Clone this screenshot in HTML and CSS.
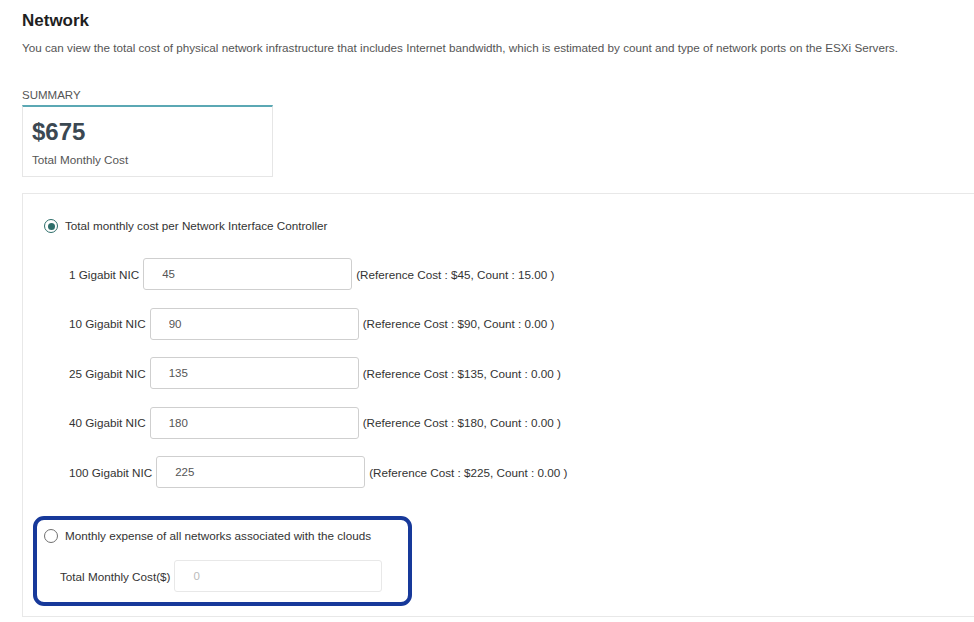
FILE: index.html
```html
<!DOCTYPE html>
<html>
<head>
<meta charset="utf-8">
<link rel="stylesheet" href="styles.css">
</head>
<body>
<div class="page">
  <h1 class="title">Network</h1>
  <p class="desc">You can view the total cost of physical network infrastructure that includes Internet bandwidth, which is estimated by count and type of network ports on the ESXi Servers.</p>

  <div class="summary-label">SUMMARY</div>
  <div class="summary-card">
    <div class="summary-value">$675</div>
    <div class="summary-sub">Total Monthly Cost</div>
  </div>

  <div class="panel">
    <div class="option-row">
      <span class="radio checked"></span>
      <span class="option-text">Total monthly cost per Network Interface Controller</span>
    </div>
    <div class="nic-list">
      <div class="nic-row">
        <span class="nic-label">1 Gigabit NIC</span>
        <input class="nic-input" type="text" value="45">
        <span class="nic-ref">(Reference Cost : $45, Count : 15.00 )</span>
      </div>
      <div class="nic-row">
        <span class="nic-label">10 Gigabit NIC</span>
        <input class="nic-input" type="text" value="90">
        <span class="nic-ref">(Reference Cost : $90, Count : 0.00 )</span>
      </div>
      <div class="nic-row">
        <span class="nic-label">25 Gigabit NIC</span>
        <input class="nic-input" type="text" value="135">
        <span class="nic-ref">(Reference Cost : $135, Count : 0.00 )</span>
      </div>
      <div class="nic-row">
        <span class="nic-label">40 Gigabit NIC</span>
        <input class="nic-input" type="text" value="180">
        <span class="nic-ref">(Reference Cost : $180, Count : 0.00 )</span>
      </div>
      <div class="nic-row">
        <span class="nic-label">100 Gigabit NIC</span>
        <input class="nic-input" type="text" value="225">
        <span class="nic-ref">(Reference Cost : $225, Count : 0.00 )</span>
      </div>
    </div>

    <div class="highlight">
      <div class="option-row small">
        <span class="radio"></span>
        <span class="option-text">Monthly expense of all networks associated with the clouds</span>
      </div>
      <div class="total-row">
        <span class="nic-label">Total Monthly Cost($)</span>
        <input class="nic-input disabled" type="text" placeholder="0" disabled>
      </div>
    </div>
  </div>
</div>
</body>
</html>
```

FILE: styles.css
```css
html, body {
  margin: 0;
  padding: 0;
  background: #ffffff;
  overflow: hidden;
}
body {
  font-family: "Liberation Sans", Arial, Helvetica, sans-serif;
  color: #333;
}
.page {
  padding: 11px 0 0 22px;
  width: 980px;
}
.title {
  margin: 0;
  font-size: 17px;
  line-height: 20px;
  font-weight: bold;
  color: #1f1f1f;
}
.desc {
  margin: 9px 0 0 0;
  font-size: 11.7px;
  line-height: 16px;
  color: #555;
}
.summary-label {
  margin-top: 32px;
  font-size: 11.5px;
  line-height: 14px;
  color: #555;
}
.summary-card {
  margin-top: 3px;
  height: 69px;
  border: 1px solid #e6e6e6;
  border-top: 2px solid #5ba8b4;
  padding: 0 0 0 9px;
  box-sizing: content-box;
  width: 240px;
}
.summary-value {
  margin-top: 11px;
  font-size: 24px;
  line-height: 28px;
  font-weight: bold;
  color: #3b4852;
}
.summary-sub {
  margin-top: 6px;
  font-size: 11.7px;
  line-height: 16px;
  color: #555;
}
.panel {
  margin-top: 16px;
  border: 1px solid #e8e8e8;
  border-right: none;
  padding: 24px 0 10px 10px;
}
.option-row {
  display: flex;
  align-items: center;
  gap: 7px;
  padding-left: 11px;
  height: 16px;
}
.option-row.small {
  padding-left: 7px;
}
.radio {
  width: 14px;
  height: 14px;
  box-sizing: border-box;
  border: 1.5px solid #707070;
  border-radius: 50%;
  display: inline-flex;
  align-items: center;
  justify-content: center;
  background: #fff;
}
.radio.checked {
  border: 1.5px solid #2e6e6a;
}
.radio.checked::after {
  content: "";
  width: 7px;
  height: 7px;
  border-radius: 50%;
  background: #2e6e6a;
}
.option-text {
  font-size: 11.7px;
  line-height: 16px;
  color: #333;
}
.nic-list {
  display: flex;
  flex-direction: column;
  gap: 17.5px;
  padding-left: 36px;
  margin-top: 24px;
}
.nic-row {
  display: flex;
  align-items: center;
  gap: 4px;
  height: 32px;
}
.nic-label {
  font-size: 11.7px;
  color: #333;
}
.nic-input {
  width: 209px;
  height: 32px;
  box-sizing: border-box;
  border: 1px solid #cfcfcf;
  border-radius: 3px;
  padding: 0 0 0 18px;
  font-family: "Liberation Sans", Arial, sans-serif;
  font-size: 11.5px;
  color: #555;
  background: #fff;
  outline: none;
  margin: 0;
}
.nic-input.disabled {
  border-color: #e8e8e8;
  width: 208px;
}
.nic-input.disabled::placeholder {
  color: #bbb;
}
.nic-ref {
  font-size: 11.7px;
  color: #333;
}
.highlight {
  margin-top: 28px;
  width: 371px;
  border: 4px solid #17399a;
  border-radius: 11px;
  padding: 8px 0 10px 0;
}
.total-row {
  display: flex;
  align-items: center;
  gap: 4px;
  padding-left: 23px;
  margin-top: 16px;
  height: 32px;
}
```
